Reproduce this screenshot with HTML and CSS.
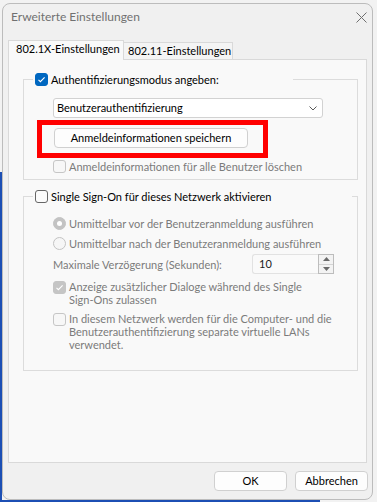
FILE: index.html
```html
<!DOCTYPE html>
<html lang="de">
<head>
<meta charset="utf-8">
<title>Erweiterte Einstellungen</title>
<link rel="stylesheet" href="styles.css">
</head>
<body>
<div class="window">
  <div class="titlebar">
    <span class="title">Erweiterte Einstellungen</span>
    <svg class="close" width="11" height="11" viewBox="0 0 11 11"><path d="M0.5 0.5L10.5 10.5M10.5 0.5L0.5 10.5" stroke="#6f6f6f" stroke-width="1"/></svg>
  </div>
  <div class="tabs">
    <div class="tab tab-active">802.1X-Einstellungen</div>
    <div class="tab tab-inactive">802.11-Einstellungen</div>
  </div>
  <div class="page">
    <fieldset class="group">
      <legend class="legend legend-1">
        <span class="legend-inner">
          <span class="cb cb-checked"><svg width="11" height="11" viewBox="0 0 11 11"><path d="M2.5 5.8L4.4 7.7L8.6 3.4" fill="none" stroke="#fff" stroke-width="1.1"/></svg></span>
          <span>Authentifizierungsmodus angeben:</span>
        </span>
      </legend>
      <div class="select">
        <span>Benutzerauthentifizierung</span>
        <svg width="8" height="5" viewBox="0 0 8 5"><path d="M0.5 0.5L4 4L7.5 0.5" fill="none" stroke="#5a5a5a" stroke-width="1"/></svg>
      </div>
      <div class="highlight">
        <div class="btn">Anmeldeinformationen speichern</div>
      </div>
      <div class="row row-first-after">
        <span class="cb cb-disabled"></span>
        <span class="dim">Anmeldeinformationen für alle Benutzer löschen</span>
      </div>
    </fieldset>

    <fieldset class="group group-2">
      <legend class="legend legend-2">
        <span class="legend-inner">
          <span class="cb cb-dark"></span>
          <span>Single Sign-On für dieses Netzwerk aktivieren</span>
        </span>
      </legend>
      <div class="row row-radio">
        <span class="radio radio-on"><span class="dot"></span></span>
        <span class="dim">Unmittelbar vor der Benutzeranmeldung ausführen</span>
      </div>
      <div class="row row-radio row-radio-2">
        <span class="radio"></span>
        <span class="dim">Unmittelbar nach der Benutzeranmeldung ausführen</span>
      </div>
      <div class="spin-row">
        <span class="dim spin-label">Maximale Verzögerung (Sekunden):</span>
        <div class="spin">
          <div class="spin-field">10</div>
          <div class="spin-btns">
            <div class="spin-half"><svg width="7" height="4" viewBox="0 0 7 4"><path d="M0 4L3.5 0L7 4Z" fill="#6a6a6a"/></svg></div>
            <div class="spin-half spin-half-down"><svg width="7" height="4" viewBox="0 0 7 4"><path d="M0 0L3.5 4L7 0Z" fill="#6a6a6a"/></svg></div>
          </div>
        </div>
      </div>
      <div class="row row-multi">
        <span class="cb cb-checked-disabled"><svg width="11" height="11" viewBox="0 0 11 11"><path d="M2.5 5.8L4.4 7.7L8.6 3.4" fill="none" stroke="#fff" stroke-width="1.1"/></svg></span>
        <span class="dim">Anzeige zusätzlicher Dialoge während des Single<br>Sign-Ons zulassen</span>
      </div>
      <div class="row row-multi">
        <span class="cb cb-disabled"></span>
        <span class="dim">In diesem Netzwerk werden für die Computer- und die<br>Benutzerauthentifizierung separate virtuelle LANs<br>verwendet.</span>
      </div>
    </fieldset>
  </div>
  <div class="footer">
    <div class="btn btn-footer">OK</div>
    <div class="btn btn-footer">Abbrechen</div>
  </div>
</div>
</body>
</html>
```

FILE: styles.css
```css
* { box-sizing: border-box; }
html, body { margin: 0; }
body {
  width: 377px;
  height: 502px;
  overflow: hidden;
  padding: 3px 0 0 2px;
  font-family: Lato, "Noto Sans", "Liberation Sans", sans-serif;
  font-size: 11px;
  color: #000;
  background:
    linear-gradient(#1c4fb4, #1c4fb4) left bottom / 2px 330px no-repeat,
    linear-gradient(#1c4fb4, #1c4fb4) left bottom / 320px 2px no-repeat,
    #f2f2f2;
}
.window {
  width: 371px;
  height: 497px;
  border: 1px solid #bcbcbc;
  border-radius: 8px;
  background: #f0f0f0;
  display: flex;
  flex-direction: column;
  overflow: hidden;
}
.titlebar {
  flex: none;
  height: 36px;
  display: flex;
  justify-content: space-between;
  align-items: flex-start;
  padding: 5px 5px 0 8px;
}
.title { font-size: 12px; line-height: 16px; color: #707070; }
.close { margin-top: 3px; }

.tabs {
  flex: none;
  height: 19px;
  display: flex;
  align-items: flex-end;
  padding-left: 5px;
}
.tab {
  line-height: 16px;
  white-space: nowrap;
  border: 1px solid #d9d9d9;
  border-bottom: none;
}
.tab-active {
  width: 116px;
  height: 20px;
  margin-bottom: -1px;
  padding-left: 7px;
  background: #f9f9f9;
  position: relative;
  z-index: 1;
}
.tab-inactive {
  width: 109px;
  height: 17px;
  border-left: none;
  padding-left: 4px;
  background: #f4f4f4;
}

.page {
  flex: none;
  height: 404px;
  margin: 0 5px;
  border: 1px solid #d9d9d9;
  background: #f9f9f9;
  padding: 11px 0 0 14px;
}
.group {
  margin: 0;
  width: 335px;
  min-width: 0;
  border: 1px solid #dcdcdc;
  padding: 10px 0 6px 9px;
}
.group-2 { margin-top: 8px; padding-bottom: 19px; }
.legend {
  padding: 0 2px;
  height: 17px;
  line-height: 17px;
}
.legend-1 { width: 260px; }
.legend-2 { width: 319px; }
.legend-inner {
  display: flex;
  align-items: center;
  gap: 3px;
  height: 17px;
  white-space: nowrap;
}

.cb {
  flex: none;
  width: 13px;
  height: 13px;
  border: 1px solid #c9c9c9;
  border-radius: 3px;
  background: #f8f8f8;
  display: flex;
  align-items: center;
  justify-content: center;
}
.cb-checked { background: #0067c0; border-color: #0067c0; }
.cb-dark { border-color: #666; background: #fbfbfb; }
.cb-disabled { border-color: #c6c6c6; background: #f7f7f7; }
.cb-checked-disabled { background: #c5c5c5; border-color: #c5c5c5; }

.radio {
  flex: none;
  width: 13px;
  height: 13px;
  border-radius: 50%;
  border: 1px solid #c3c3c3;
  background: #f6f6f6;
  display: flex;
  align-items: center;
  justify-content: center;
}
.radio-on { background: #c3c3c3; }
.dot { width: 5px; height: 5px; border-radius: 50%; background: #fff; }

.select {
  margin-left: 20px;
  width: 270px;
  height: 20px;
  border: 1px solid #d2d2d2;
  border-radius: 3px;
  background: #fff;
  display: flex;
  align-items: center;
  justify-content: space-between;
  padding: 0 5px 0 3px;
  line-height: 16px;
}

.highlight {
  margin: 2px 0 0 4px;
  width: 231px;
  border: 5px solid #ff0000;
  padding: 3px 15px 5px 12px;
}
.btn {
  height: 20px;
  border: 1px solid #d0d0d0;
  border-radius: 4px;
  background: #fdfdfd;
  display: flex;
  align-items: center;
  justify-content: center;
  line-height: 16px;
  white-space: nowrap;
}

.row {
  display: flex;
  align-items: center;
  gap: 3px;
  margin-left: 20px;
  height: 14px;
  white-space: nowrap;
}
.row-first-after { margin-top: 1px; }
.row-radio { height: 16px; }
.row-radio-2 { margin-top: 4px; }
.row-multi {
  height: auto;
  align-items: flex-start;
  line-height: 13px;
  margin-top: 6px;
}
.row-multi .cb { margin-top: 1px; }
.dim { color: #7b7b7b; }

.spin-row {
  display: flex;
  align-items: center;
  height: 20px;
  margin: 3px 0 0 20px;
  white-space: nowrap;
}
.spin-label { width: 199px; }
.spin { display: flex; width: 82px; height: 20px; }
.spin-field {
  flex: 1;
  border: 1px solid #e2e2e2;
  border-right: none;
  border-radius: 3px 0 0 3px;
  background: #fafafa;
  padding-left: 6px;
  line-height: 18px;
  color: #1a1a1a;
}
.spin-btns {
  width: 16px;
  border: 1px solid #bdbdbd;
  background: #f3f3f3;
  display: flex;
  flex-direction: column;
}
.spin-half {
  flex: 1;
  display: flex;
  align-items: center;
  justify-content: center;
}
.spin-half-down { border-top: 1px solid #d4d4d4; }

.footer {
  flex: none;
  display: flex;
  justify-content: flex-end;
  gap: 8px;
  margin-top: 8px;
  padding-right: 4px;
}
.btn-footer { width: 73px; }
```
